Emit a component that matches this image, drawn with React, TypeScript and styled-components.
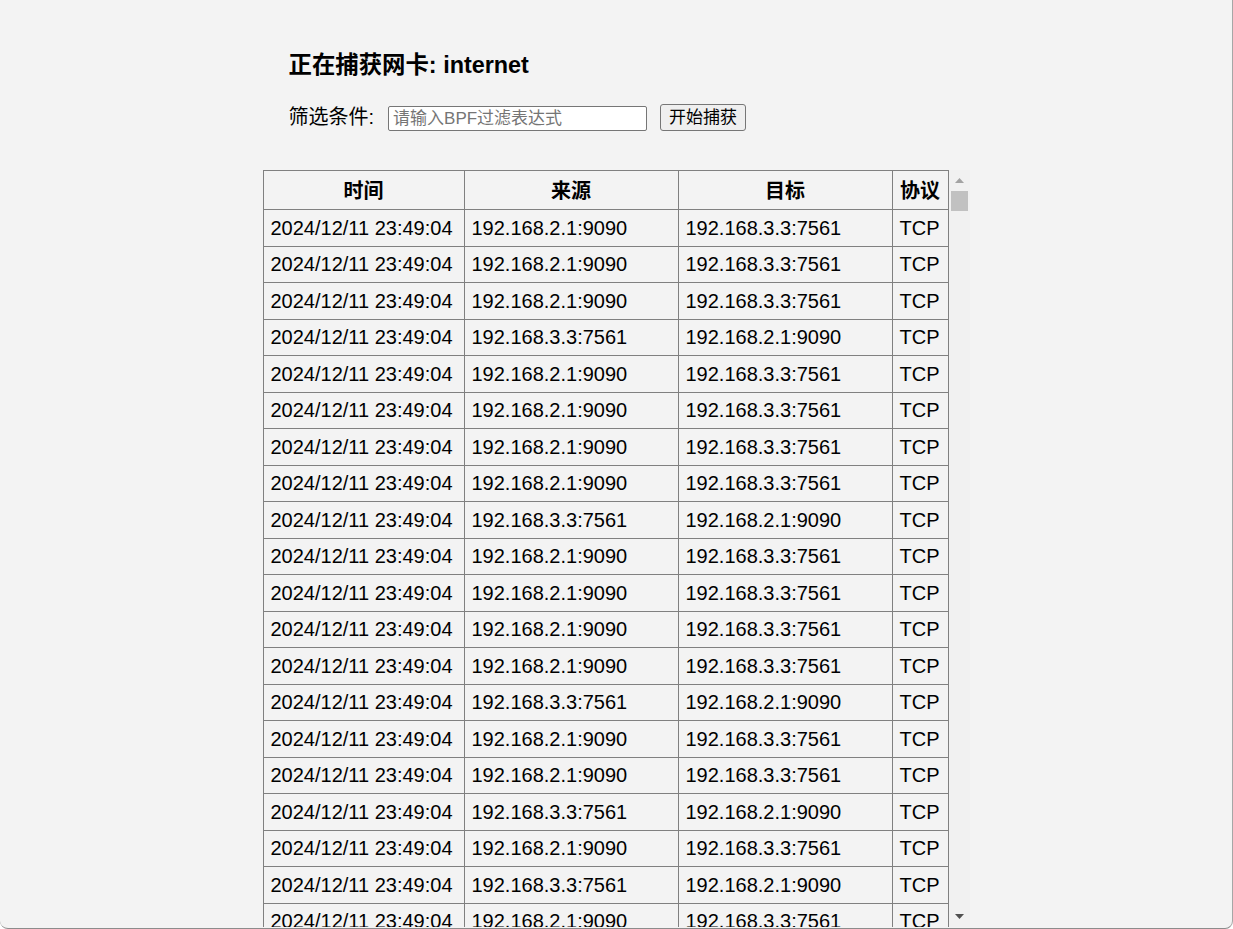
import React from "react";
import styled, { createGlobalStyle } from "styled-components";

const GlobalStyle = createGlobalStyle`
  html, body {
    margin: 0;
    padding: 0;
    background: #ffffff;
    overflow: hidden;
  }
  body {
    font-family: "Liberation Sans", "Noto Sans CJK SC", sans-serif;
    color: #000;
  }
`;

const Page = styled.div`
  box-sizing: border-box;
  width: 1233px;
  height: 929px;
  background: #f3f3f3;
  border-right: 1px solid #a6a6a6;
  border-bottom: 1px solid #8c8c8c;
  border-bottom-left-radius: 8px;
  border-bottom-right-radius: 8px;
  display: flex;
  flex-direction: column;
  align-items: center;
  overflow: hidden;
`;

const Content = styled.div`
  width: 707px;
  display: flex;
  flex-direction: column;
`;

const Header = styled.div`
  padding: 52px 0 0 26px;
  display: flex;
  flex-direction: column;
`;

const Title = styled.h3`
  margin: 0;
  font-size: 23.4px;
  line-height: 27px;
  font-weight: bold;
`;

const FilterRow = styled.div`
  margin-top: 25px;
  height: 27px;
  display: flex;
  align-items: center;
`;

const Label = styled.label`
  font-size: 20px;
  line-height: 27px;
`;

const FilterInput = styled.input`
  box-sizing: border-box;
  margin: 2px 0 0 14px;
  width: 259px;
  height: 25px;
  padding: 1px 4px;
  border: 1px solid #767676;
  border-radius: 2px;
  background: #fff;
  font-family: "Liberation Sans", "Noto Sans CJK SC", sans-serif;
  font-size: 17px;
  outline: none;
  &::placeholder {
    color: #757575;
  }
`;

const Button = styled.button`
  box-sizing: border-box;
  margin-left: 13px;
  height: 27px;
  padding: 0 8px;
  border: 1px solid #767676;
  border-radius: 3px;
  background: #efefef;
  color: #000;
  font-family: "Liberation Sans", "Noto Sans CJK SC", sans-serif;
  font-size: 17px;
  line-height: 23px;
`;

const TableArea = styled.div`
  margin-top: 39px;
  height: 757px;
  display: flex;
`;

const Viewport = styled.div`
  width: 686px;
  height: 100%;
  overflow: hidden;
`;

const ScrollBar = styled.div`
  width: 21px;
  height: 100%;
  background: #f1f1f1;
  display: flex;
  flex-direction: column;
`;

const ArrowButton = styled.div`
  height: 21px;
  flex: none;
  display: flex;
  align-items: center;
  justify-content: center;
`;

const Track = styled.div`
  flex: 1;
  padding: 0 2px;
`;

const Thumb = styled.div`
  height: 20px;
  background: #c1c1c1;
`;

const Table = styled.table`
  width: 685px;
  table-layout: fixed;
  border-collapse: collapse;
  font-size: 20px;
`;

const HeadCell = styled.th`
  border: 1px solid #808080;
  padding: 8px 6.25px 4.5px;
  line-height: 25.5px;
  font-weight: bold;
  text-align: center;
  white-space: nowrap;
`;

const Cell = styled.td`
  border: 1px solid #808080;
  padding: 6.5px 6.25px 6px 7px;
  line-height: 23px;
  text-align: left;
  white-space: nowrap;
`;

const A = { src: "192.168.2.1:9090", dst: "192.168.3.3:7561" };
const B = { src: "192.168.3.3:7561", dst: "192.168.2.1:9090" };
const pattern = [A, A, A, B, A, A, A, A, B, A, A, A, A, B, A, A, B, A, B, A];

const rows = pattern.map((p) => ({
  time: "2024/12/11 23:49:04",
  ...p,
  proto: "TCP",
}));

const Triangle = ({ down }: { down?: boolean }) => (
  <svg width="9" height="5" viewBox="0 0 9 5">
    <polygon
      points={down ? "0,0 9,0 4.5,5" : "4.5,0 9,5 0,5"}
      fill={down ? "#505050" : "#a3a3a3"}
    />
  </svg>
);

export default function App() {
  return (
    <>
      <GlobalStyle />
      <Page>
        <Content>
          <Header>
            <Title>正在捕获网卡: internet</Title>
            <FilterRow>
              <Label htmlFor="bpf">筛选条件:</Label>
              <FilterInput id="bpf" type="text" placeholder="请输入BPF过滤表达式" />
              <Button>开始捕获</Button>
            </FilterRow>
          </Header>
          <TableArea>
            <Viewport>
              <Table>
                <colgroup>
                  <col style={{ width: 201 }} />
                  <col style={{ width: 214 }} />
                  <col style={{ width: 214 }} />
                  <col style={{ width: 56 }} />
                </colgroup>
                <thead>
                  <tr>
                    <HeadCell>时间</HeadCell>
                    <HeadCell>来源</HeadCell>
                    <HeadCell>目标</HeadCell>
                    <HeadCell>协议</HeadCell>
                  </tr>
                </thead>
                <tbody>
                  {rows.map((r, i) => (
                    <tr key={i}>
                      <Cell>{r.time}</Cell>
                      <Cell>{r.src}</Cell>
                      <Cell>{r.dst}</Cell>
                      <Cell>{r.proto}</Cell>
                    </tr>
                  ))}
                </tbody>
              </Table>
            </Viewport>
            <ScrollBar>
              <ArrowButton>
                <Triangle />
              </ArrowButton>
              <Track>
                <Thumb />
              </Track>
              <ArrowButton>
                <Triangle down />
              </ArrowButton>
            </ScrollBar>
          </TableArea>
        </Content>
      </Page>
    </>
  );
}
